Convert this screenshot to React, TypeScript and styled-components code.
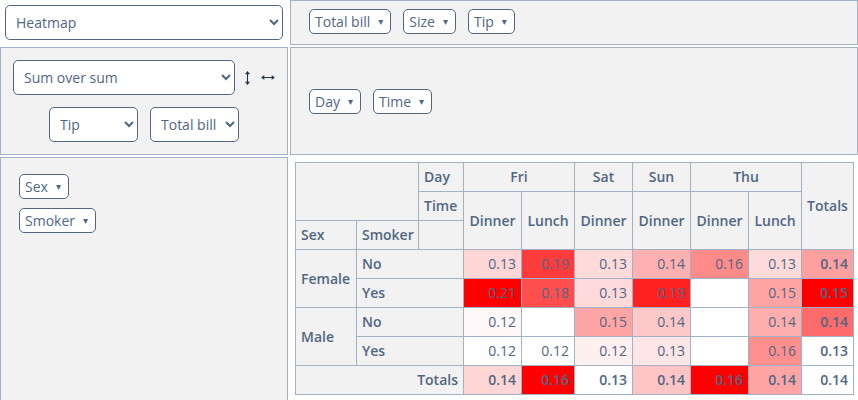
import React from "react";
import styled, { createGlobalStyle } from "styled-components";

const GlobalStyle = createGlobalStyle`
  html, body { margin: 0; padding: 0; background: #ffffff; }
  body {
    font-family: "Open Sans", "DejaVu Sans", sans-serif;
    color: #506784;
    font-size: 14px;
  }
`;

const Layout = styled.div`
  display: grid;
  grid-template-columns: 288px 568px;
  grid-template-rows: 45px 108px 262px;
  gap: 2px;
  width: 858px;
`;

const RendererCell = styled.div`
  padding: 5px;
  background: #ffffff;
`;

const Panel = styled.div`
  box-sizing: border-box;
  border: 1px solid #a2b1c6;
  background: #f2f2f2;
`;

const UnusedPanel = styled(Panel)`
  display: flex;
  align-items: flex-start;
  gap: 12px;
  padding: 8px 18px;
`;

const ColsPanel = styled(Panel)`
  display: flex;
  align-items: center;
  gap: 12px;
  padding: 0 18px;
`;

const RowsPanel = styled(Panel)`
  display: flex;
  flex-direction: column;
  align-items: flex-start;
  gap: 9px;
  padding: 16px 18px;
`;

const ValsPanel = styled(Panel)`
  display: flex;
  flex-direction: column;
  align-items: center;
  gap: 12px;
  padding: 12px 0;
`;

const ValsRow = styled.div`
  display: flex;
  align-items: center;
  gap: 12px;
`;

const AggRow = styled.div`
  display: flex;
  align-items: center;
`;

const Select = styled.select<{ $w: number }>`
  box-sizing: border-box;
  width: ${(p) => p.$w}px;
  height: 35px;
  border: 1px solid #506784;
  border-radius: 5px;
  background: #ffffff;
  color: #506784;
  font-family: "Open Sans", sans-serif;
  font-size: 14px;
  padding: 0 6px;
  outline: none;
`;

const OrderButton = styled.span`
  display: inline-flex;
  align-items: center;
  justify-content: center;
  width: 15px;
  height: 20px;
  margin-left: 5px;
  color: #22304a;
  cursor: pointer;
`;

const OutputCell = styled.div`
  padding: 5px;
  background: #ffffff;
`;

const Pill = styled.span`
  display: inline-flex;
  align-items: center;
  white-space: nowrap;
  background: #ffffff;
  border: 1px solid #506784;
  border-radius: 5px;
  padding: 2px 7px 2px 5px;
  line-height: 19px;
  font-size: 14px;
  color: #506784;
`;

const Triangle = styled.span`
  font-family: "DejaVu Sans", sans-serif;
  font-size: 10px;
  margin-left: 8px;
  color: #506784;
`;

const PivotTable = styled.table`
  border-collapse: collapse;
  table-layout: fixed;
  width: 558px;
  font-size: 14px;
  line-height: 18px;
  color: #506784;
`;

const Col = styled.col<{ $w: number }>`
  width: ${(p) => p.$w}px;
`;

const Th = styled.th<{ $align?: string }>`
  background: #f2f2f2;
  border: 1px solid #a2b1c6;
  padding: 5px;
  font-weight: 600;
  text-align: ${(p) => p.$align || "left"};
  vertical-align: middle;
  white-space: nowrap;
  overflow: hidden;
`;

const Td = styled.td<{ $total?: boolean }>`
  border: 1px solid #a2b1c6;
  padding: 5px;
  text-align: right;
  vertical-align: top;
  font-weight: ${(p) => (p.$total ? 600 : 400)};
  background: #ffffff;
  white-space: nowrap;
`;

type Cell = [string, number] | null;

const heat = (c: Cell) =>
  c ? { backgroundColor: `rgb(255,${c[1]},${c[1]})` } : undefined;

const rows: { sex?: string; smoker: string; cells: Cell[]; total: Cell }[] = [
  {
    sex: "Female",
    smoker: "No",
    cells: [["0.13", 214], ["0.19", 60], ["0.13", 218], ["0.14", 176], ["0.16", 138], ["0.13", 218]],
    total: ["0.14", 160],
  },
  {
    smoker: "Yes",
    cells: [["0.21", 0], ["0.18", 78], ["0.13", 218], ["0.19", 32], null, ["0.15", 163]],
    total: ["0.15", 0],
  },
  {
    sex: "Male",
    smoker: "No",
    cells: [["0.12", 248], null, ["0.15", 165], ["0.14", 200], null, ["0.14", 173]],
    total: ["0.14", 106],
  },
  {
    smoker: "Yes",
    cells: [["0.12", 254], ["0.12", 255], ["0.12", 240], ["0.13", 230], null, ["0.16", 143]],
    total: ["0.13", 255],
  },
];

const colTotals: Cell[] = [["0.14", 214], ["0.16", 0], ["0.13", 255], ["0.14", 196], ["0.16", 0], ["0.14", 165]];

const colWidths = [61, 62, 45, 58, 53, 58, 58, 58, 53, 52];

const Attr = ({ name }: { name: string }) => (
  <Pill>
    {name}
    <Triangle>▾</Triangle>
  </Pill>
);

const VArrow = () => (
  <svg width="5" height="14" viewBox="0 0 5 14" fill="none" stroke="currentColor" strokeWidth="1.1">
    <path d="M2.5 1v12M0.6 3.4L2.5 1l1.9 2.4M0.6 10.6L2.5 13l1.9-2.4" />
  </svg>
);

const HArrow = () => (
  <svg width="14" height="5" viewBox="0 0 14 5" fill="none" stroke="currentColor" strokeWidth="1.1">
    <path d="M1 2.5h12M3.4 0.6L1 2.5l2.4 1.9M10.6 0.6L13 2.5l-2.4 1.9" />
  </svg>
);

export default function App() {
  return (
    <>
      <GlobalStyle />
      <Layout>
        <RendererCell>
          <Select $w={278} defaultValue="Heatmap">
            <option>Heatmap</option>
          </Select>
        </RendererCell>
        <UnusedPanel>
          <Attr name="Total bill" />
          <Attr name="Size" />
          <Attr name="Tip" />
        </UnusedPanel>

        <ValsPanel>
          <AggRow>
            <Select $w={222} defaultValue="Sum over sum">
              <option>Sum over sum</option>
            </Select>
            <OrderButton role="button" aria-label="↕">
              <VArrow />
            </OrderButton>
            <OrderButton role="button" aria-label="↔">
              <HArrow />
            </OrderButton>
          </AggRow>
          <ValsRow>
            <Select $w={89} defaultValue="Tip">
              <option>Tip</option>
            </Select>
            <Select $w={89} defaultValue="Total bill">
              <option>Total bill</option>
            </Select>
          </ValsRow>
        </ValsPanel>
        <ColsPanel>
          <Attr name="Day" />
          <Attr name="Time" />
        </ColsPanel>

        <RowsPanel>
          <Attr name="Sex" />
          <Attr name="Smoker" />
        </RowsPanel>
        <OutputCell>
          <PivotTable>
            <colgroup>
              {colWidths.map((w, i) => (
                <Col key={i} $w={w} />
              ))}
            </colgroup>
            <thead>
              <tr>
                <Th colSpan={2} rowSpan={2} />
                <Th>Day</Th>
                <Th colSpan={2} $align="center">Fri</Th>
                <Th $align="center">Sat</Th>
                <Th $align="center">Sun</Th>
                <Th colSpan={2} $align="center">Thu</Th>
                <Th rowSpan={3} $align="center">Totals</Th>
              </tr>
              <tr>
                <Th>Time</Th>
                {["Dinner", "Lunch", "Dinner", "Dinner", "Dinner", "Lunch"].map((t, i) => (
                  <Th key={i} rowSpan={2} $align="center">
                    {t}
                  </Th>
                ))}
              </tr>
              <tr>
                <Th>Sex</Th>
                <Th>Smoker</Th>
                <Th />
              </tr>
            </thead>
            <tbody>
              {rows.map((r, i) => (
                <tr key={i}>
                  {r.sex && <Th rowSpan={2}>{r.sex}</Th>}
                  <Th colSpan={2}>{r.smoker}</Th>
                  {r.cells.map((c, j) => (
                    <Td key={j} style={heat(c)}>
                      {c ? c[0] : ""}
                    </Td>
                  ))}
                  <Td $total style={heat(r.total)}>
                    {r.total ? r.total[0] : ""}
                  </Td>
                </tr>
              ))}
              <tr>
                <Th colSpan={3} $align="right">Totals</Th>
                {colTotals.map((c, j) => (
                  <Td key={j} $total style={heat(c)}>
                    {c ? c[0] : ""}
                  </Td>
                ))}
                <Td $total>0.14</Td>
              </tr>
            </tbody>
          </PivotTable>
        </OutputCell>
      </Layout>
    </>
  );
}
